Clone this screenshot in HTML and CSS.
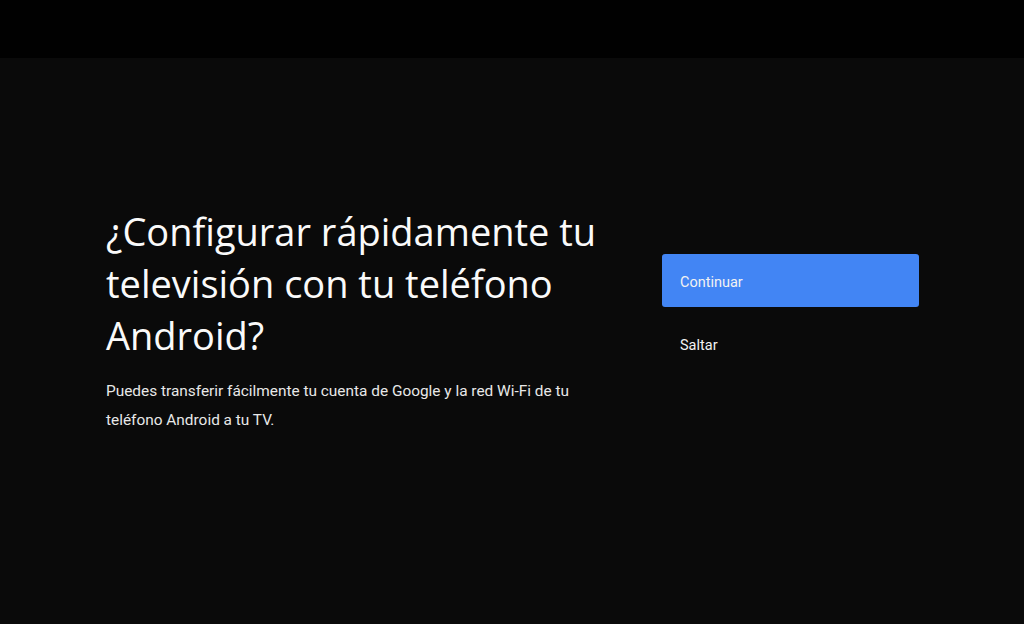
FILE: index.html
```html
<!DOCTYPE html>
<html lang="es">
<head>
  <meta charset="UTF-8" />
  <title>Configuración</title>
  <link rel="stylesheet" href="styles.css">
</head>
<body>
  <div class="topbar"></div>
  <main class="screen">
    <section class="intro">
      <h1>¿Configurar rápidamente tu televisión con tu teléfono Android?</h1>
      <p>Puedes transferir fácilmente tu cuenta de Google y la red Wi-Fi de tu teléfono Android a tu TV.</p>
    </section>
    <section class="actions">
      <button class="action primary">Continuar</button>
      <button class="action">Saltar</button>
    </section>
  </main>
</body>
</html>
```

FILE: styles.css
```css
html, body {
  margin: 0;
  height: 100%;
  background: #0a0a0a;
}
body {
  display: flex;
  flex-direction: column;
}
.topbar {
  height: 58px;
  background: #010101;
}
.screen {
  flex: 1;
  display: flex;
  padding: 147px 0 0 106px;
  color: #fff;
}
.intro {
  width: 520px;
}
.intro h1 {
  margin: 0;
  font-family: "Open Sans", sans-serif;
  font-weight: 400;
  font-size: 38px;
  line-height: 52px;
  color: #fafafa;
}
.intro p {
  margin: 16px 0 0;
  font-family: Roboto, sans-serif;
  font-size: 15.4px;
  line-height: 29px;
  color: #e8e8e8;
  width: 480px;
}
.actions {
  margin-left: 36px;
  padding-top: 49px;
  display: flex;
  flex-direction: column;
  width: 257px;
}
.action {
  height: 53px;
  padding: 3px 18px 0;
  border: 0;
  border-radius: 3px;
  background: transparent;
  color: #f2f2f2;
  text-align: left;
  font-family: Roboto, sans-serif;
  font-size: 14.5px;
}
.action.primary {
  background: #4285f4;
  margin-bottom: 10px;
}
```
